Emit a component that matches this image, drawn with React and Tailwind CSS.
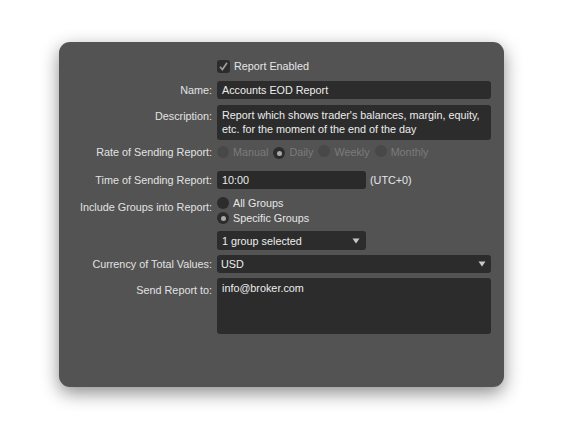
import React from "react";

const Label = ({ children, className = "" }) => (
  <div className={`w-[153px] shrink-0 text-right text-[#e2e2e2] ${className}`}>{children}</div>
);

const Radio = ({ checked, disabled }) => (
  <span
    className={`inline-flex items-center justify-center w-[12px] h-[12px] rounded-full ${
      disabled && !checked ? "bg-[#484848]" : "bg-[#2c2c2c]"
    }`}
  >
    {checked && <span className="w-[5px] h-[5px] rounded-full bg-[#a8a8a8]" />}
  </span>
);

const Caret = () => (
  <svg width="8" height="6" viewBox="0 0 8 6" className="shrink-0">
    <path d="M0.5 0.5 L7.5 0.5 L4 5.5 Z" fill="#c8c8c8" />
  </svg>
);

export default function App() {
  return (
    <div className="w-[564px] h-[442px] bg-white pt-[42px] pl-[59px]" style={{ fontFamily: '"Liberation Sans", Arial, sans-serif' }}>
      <div className="w-[445px] h-[345px] bg-[#535353] rounded-[11px] shadow-[0_6px_18px_rgba(0,0,0,0.45)] pr-[13px] pt-[17px] text-[10.8px] leading-[14px]">
        {/* report enabled */}
        <div className="flex items-center gap-[5px] h-[14px]">
          <Label />
          <div className="flex items-center gap-[4px] text-[#e6e6e6]">
            <span className="flex items-center justify-center w-[13px] h-[13px] rounded-[3px] bg-[#2c2c2c]">
              <svg width="11" height="11" viewBox="0 0 11 11">
                <path d="M2 5.8 L4.4 8.6 L9 1.8" fill="none" stroke="#9c9c9c" strokeWidth="1.7" />
              </svg>
            </span>
            Report Enabled
          </div>
        </div>

        <div className="flex items-center gap-[5px] mt-[8px]">
          <Label>Name:</Label>
          <div className="flex-1 h-[18px] rounded-[3px] bg-[#2c2c2c] text-[#ececec] px-[5px] flex items-center">
            Accounts EOD Report
          </div>
        </div>

        <div className="flex items-start gap-[5px] mt-[6px]">
          <Label className="pt-[4px]">Description:</Label>
          <div className="flex-1 h-[35px] rounded-[3px] bg-[#2c2c2c] text-[#ececec] px-[5px] pt-[3px] leading-[14px]">
            Report which shows trader's balances, margin, equity,
            <br />
            etc. for the moment of the end of the day
          </div>
        </div>

        <div className="flex items-center gap-[5px] mt-[5px] h-[14px]">
          <Label>Rate of Sending Report:</Label>
          <div className="flex items-center text-[#7b7b7b]">
            <Radio disabled />
            <span className="ml-[4px]">Manual</span>
            <span className="ml-[5px]"><Radio checked disabled /></span>
            <span className="ml-[4px]">Daily</span>
            <span className="ml-[5px]"><Radio disabled /></span>
            <span className="ml-[4px]">Weekly</span>
            <span className="ml-[5px]"><Radio disabled /></span>
            <span className="ml-[4px]">Monthly</span>
          </div>
        </div>

        <div className="flex items-center gap-[5px] mt-[12px]">
          <Label>Time of Sending Report:</Label>
          <div className="w-[149px] h-[18px] rounded-[3px] bg-[#2a2a2a] text-[#ececec] px-[5px] flex items-center">
            10:00
          </div>
          <span className="text-[#e6e6e6] ml-[-1px]">(UTC+0)</span>
        </div>

        <div className="flex items-start gap-[5px] mt-[7px]">
          <Label className="pt-[4px]">Include Groups into Report:</Label>
          <div className="flex flex-col gap-[1px] text-[#e6e6e6]">
            <div className="flex items-center gap-[4px] h-[14px]">
              <Radio />
              All Groups
            </div>
            <div className="flex items-center gap-[4px] h-[14px]">
              <Radio checked />
              Specific Groups
            </div>
          </div>
        </div>

        <div className="flex items-center gap-[5px] mt-[6px]">
          <Label />
          <div className="w-[149px] h-[19px] rounded-[3px] bg-[#2c2c2c] text-[#ececec] pl-[5px] pr-[6px] flex items-center justify-between">
            1 group selected
            <Caret />
          </div>
        </div>

        <div className="flex items-center gap-[5px] mt-[5px]">
          <Label>Currency of Total Values:</Label>
          <div className="flex-1 h-[18px] rounded-[3px] bg-[#2c2c2c] text-[#ececec] pl-[4px] pr-[5px] flex items-center justify-between">
            USD
            <Caret />
          </div>
        </div>

        <div className="flex items-start gap-[5px] mt-[5px]">
          <Label className="pt-[5px]">Send Report to:</Label>
          <div className="flex-1 h-[56px] rounded-[3px] bg-[#2c2c2c] text-[#ececec] px-[5px] pt-[3px]">
            info@broker.com
          </div>
        </div>
      </div>
    </div>
  );
}
